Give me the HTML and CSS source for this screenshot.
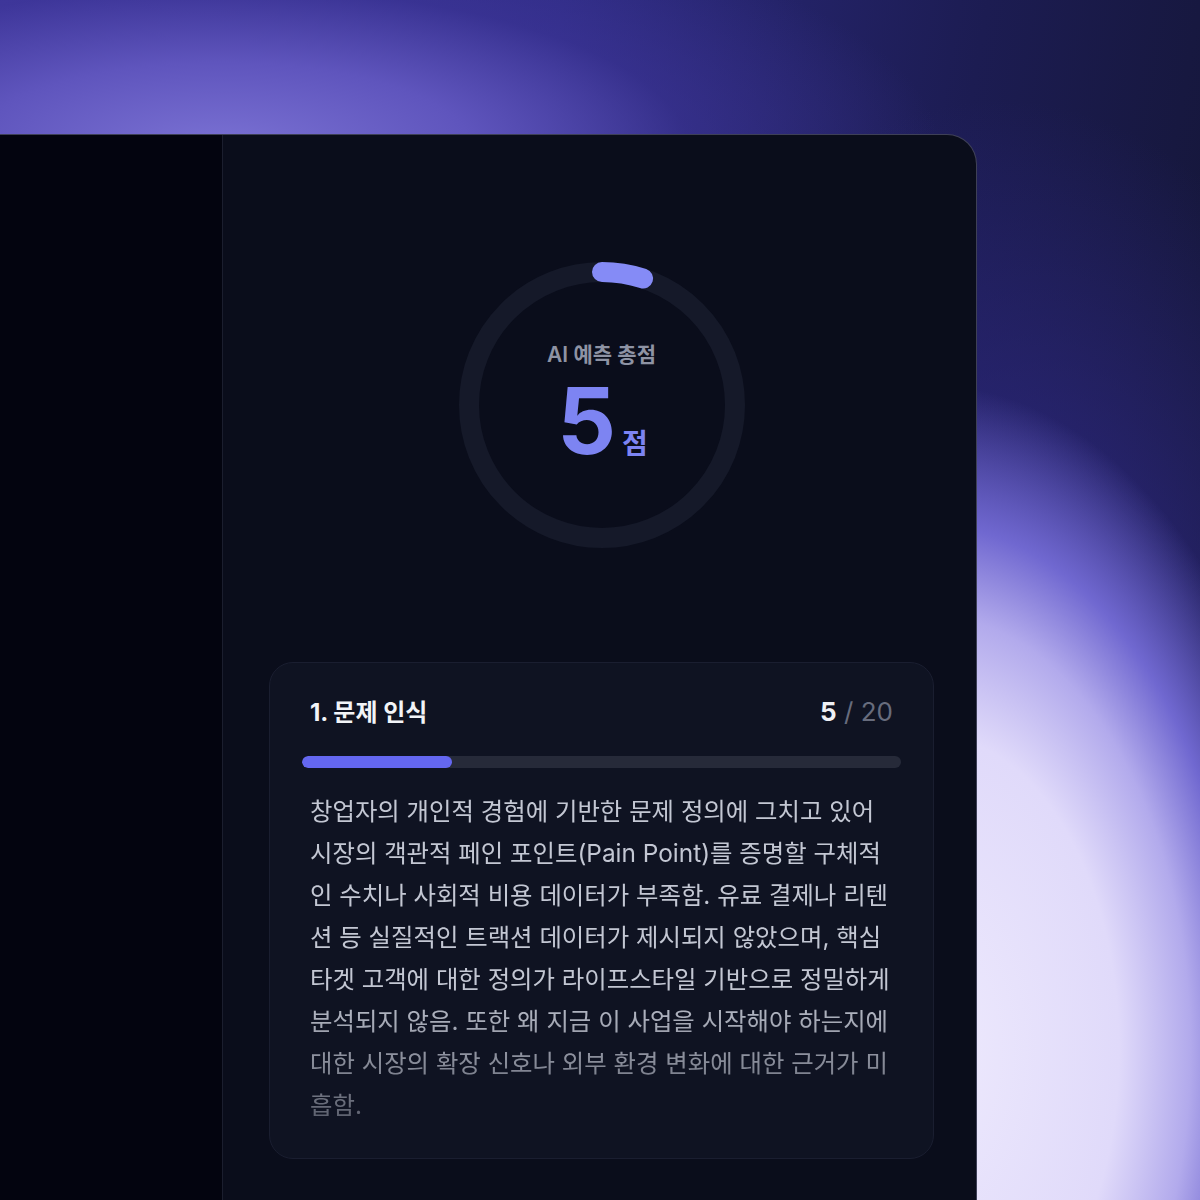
FILE: index.html
```html
<!DOCTYPE html>
<html lang="ko">
<head>
<meta charset="utf-8">
<link rel="stylesheet" href="styles.css">
</head>
<body>
<div class="stage">
  <div class="frame">
    <aside class="sidebar"></aside>
    <main class="main">
      <div class="gauge">
        <svg class="ring" width="286" height="286" viewBox="0 0 286 286">
          <circle class="ring-track" cx="143" cy="143" r="133"></circle>
          <circle class="ring-value" cx="143" cy="143" r="133" stroke-dasharray="41.8 835.7" transform="rotate(-90 143 143)"></circle>
        </svg>
        <div class="gauge-text">
          <div class="gauge-label">AI 예측 총점</div>
          <div class="gauge-score"><span class="gauge-num">5</span><span class="gauge-unit">점</span></div>
        </div>
      </div>
      <section class="card">
        <div class="card-head">
          <h2 class="card-title">1. 문제 인식</h2>
          <div class="card-score"><span class="score-now">5</span><span class="score-max"> / 20</span></div>
        </div>
        <div class="bar"><div class="bar-fill" style="width:25%"></div></div>
        <p class="card-body">창업자의 개인적 경험에 기반한 문제 정의에 그치고 있어 시장의 객관적 페인 포인트(Pain Point)를 증명할 구체적인 수치나 사회적 비용 데이터가 부족함. 유료 결제나 리텐션 등 실질적인 트랙션 데이터가 제시되지 않았으며, 핵심 타겟 고객에 대한 정의가 라이프스타일 기반으로 정밀하게 분석되지 않음. 또한 왜 지금 이 사업을 시작해야 하는지에 대한 시장의 확장 신호나 외부 환경 변화에 대한 근거가 미흡함.</p>
      </section>
    </main>
  </div>
</div>
</body>
</html>
```

FILE: styles.css
```css
html, body {
  margin: 0;
  padding: 0;
}
body {
  width: 1200px;
  height: 1200px;
  overflow: hidden;
  font-family: Inter, "Noto Sans CJK KR", sans-serif;
  background-color: #15173a;
  background-image:
    radial-gradient(ellipse 420px 700px at 930px 1050px, #eeeafd 0%, #e0dafa 45%, #b2aaec 62%, #7068d0 75%, rgba(60, 52, 160, 0) 95%),
    radial-gradient(ellipse 420px 620px at 1000px 720px, rgba(64, 56, 165, 0.9) 0%, rgba(48, 42, 135, 0.55) 50%, rgba(40, 36, 120, 0) 100%),
    radial-gradient(ellipse 720px 250px at 220px 150px, #7b72d4 0%, #5f55bd 35%, rgba(66, 56, 160, 0.5) 65%, rgba(50, 44, 140, 0) 100%),
    linear-gradient(100deg, #3a3494 0%, #2c2a80 40%, #1c1c52 70%, #12142e 100%);
}
.stage {
  padding-top: 134px;
}
.frame {
  width: 977px;
  height: 1100px;
  box-sizing: border-box;
  display: grid;
  grid-template-columns: 223px 1fr;
  background: #0a0d1b;
  border-top: 1px solid rgba(160, 160, 200, 0.35);
  border-right: 1px solid rgba(160, 160, 200, 0.35);
  border-top-right-radius: 30px;
  overflow: hidden;
}
.sidebar {
  background: #03040f;
  border-right: 1px solid #1b1e2e;
}
.main {
  padding: 127px 42px 0 46px;
  display: flex;
  flex-direction: column;
  align-items: center;
}
.gauge {
  position: relative;
  width: 286px;
  height: 286px;
}
.ring {
  display: block;
}
.ring-track {
  fill: none;
  stroke: #151929;
  stroke-width: 20;
}
.ring-value {
  fill: none;
  stroke: #858bf6;
  stroke-width: 20;
  stroke-linecap: round;
}
.gauge-text {
  position: absolute;
  inset: 0;
  display: flex;
  flex-direction: column;
  align-items: center;
  padding-top: 79px;
}
.gauge-label {
  font-size: 21px;
  font-weight: 600;
  color: #8e93a4;
  line-height: 28px;
}
.gauge-score {
  display: flex;
  align-items: baseline;
  gap: 8px;
  margin-top: 12px;
  padding-left: 2px;
}
.gauge-num {
  font-size: 92px;
  font-weight: 700;
  line-height: 80px;
  color: #7d84f2;
  letter-spacing: -2px;
}
.gauge-unit {
  font-size: 28px;
  font-weight: 700;
  line-height: 32px;
  color: #7d84f2;
}
.card {
  align-self: stretch;
  margin-top: 114px;
  background: #0f1322;
  border: 1px solid #1a1e30;
  border-radius: 24px;
  padding: 33px 32px 32px;
}
.card-head {
  display: flex;
  justify-content: space-between;
  align-items: baseline;
  padding: 0 8px;
}
.card-title {
  margin: 0;
  font-size: 24px;
  font-weight: 700;
  color: #f2f4f8;
  line-height: 32px;
}
.card-score {
  font-size: 26px;
  line-height: 32px;
}
.score-now {
  font-weight: 700;
  color: #eef0f5;
}
.score-max {
  color: #676c7d;
}
.bar {
  margin-top: 27px;
  height: 12px;
  border-radius: 6px;
  background: #262a39;
  overflow: hidden;
}
.bar-fill {
  height: 100%;
  border-radius: 6px;
  background: #6467f0;
}
.card-body {
  margin: 22px 0 0;
  padding: 0 8px;
  font-size: 24.4px;
  line-height: 42px;
  color: #c3c7d3;
  -webkit-mask-image: linear-gradient(to bottom, #000 0%, #000 58%, rgba(0, 0, 0, 0.4) 100%);
  mask-image: linear-gradient(to bottom, #000 0%, #000 58%, rgba(0, 0, 0, 0.4) 100%);
}
```
